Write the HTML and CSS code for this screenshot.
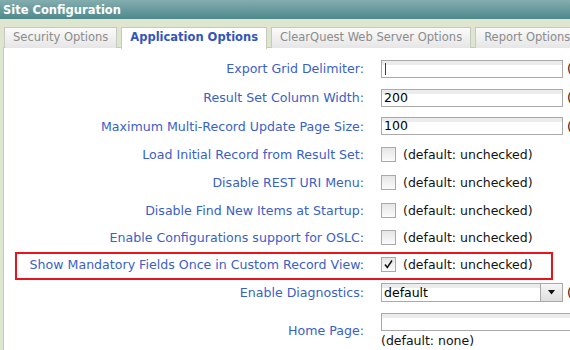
FILE: index.html
```html
<!DOCTYPE html>
<html lang="en">
<head>
    <meta charset="UTF-8">
    <title>Site Configuration</title>
    <link rel="stylesheet" href="styles.css">
</head>
<body>
    <div class="window">
        <div class="titlebar">Site Configuration</div>
        <div class="tabs">
            <div class="tab">Security Options</div>
            <div class="tab active">Application Options</div>
            <div class="tab">ClearQuest Web Server Options</div>
            <div class="tab">Report Options</div>
        </div>
        <div class="panel">
            <div class="row tall">
                <div class="label">Export Grid Delimiter:</div>
                <div class="control">
                    <div class="textbox"><span class="caret"></span></div>
                    <span class="hint">(default: ,)</span>
                </div>
            </div>
            <div class="row tall">
                <div class="label">Result Set Column Width:</div>
                <div class="control">
                    <div class="textbox">200</div>
                    <span class="hint">(default: 200)</span>
                </div>
            </div>
            <div class="row">
                <div class="label">Maximum Multi-Record Update Page Size:</div>
                <div class="control">
                    <div class="textbox">100</div>
                    <span class="hint">(default: 100)</span>
                </div>
            </div>
            <div class="row">
                <div class="label">Load Initial Record from Result Set:</div>
                <div class="control">
                    <span class="checkbox"></span>
                    <span class="note">(default: unchecked)</span>
                </div>
            </div>
            <div class="row">
                <div class="label">Disable REST URI Menu:</div>
                <div class="control">
                    <span class="checkbox"></span>
                    <span class="note">(default: unchecked)</span>
                </div>
            </div>
            <div class="row">
                <div class="label">Disable Find New Items at Startup:</div>
                <div class="control">
                    <span class="checkbox"></span>
                    <span class="note">(default: unchecked)</span>
                </div>
            </div>
            <div class="row short">
                <div class="label">Enable Configurations support for OSLC:</div>
                <div class="control">
                    <span class="checkbox"></span>
                    <span class="note">(default: unchecked)</span>
                </div>
            </div>
            <div class="row marked">
                <div class="label">Show Mandatory Fields Once in Custom Record View:</div>
                <div class="control">
                    <span class="checkbox checked">
                        <svg width="13" height="13" viewBox="0 0 13 13"><path d="M3 6.5 L5.3 9.5 L10 2.5" fill="none" stroke="#111" stroke-width="1.5"/></svg>
                    </span>
                    <span class="note">(default: unchecked)</span>
                </div>
            </div>
            <div class="row">
                <div class="label">Enable Diagnostics:</div>
                <div class="control">
                    <div class="select">
                        <span class="select-value">default</span>
                        <span class="select-button">
                            <svg width="9" height="5" viewBox="0 0 9 5"><path d="M1 0 H8 L4.5 4.5 Z" fill="#111"/></svg>
                        </span>
                    </div>
                    <span class="hint">(default: default)</span>
                </div>
            </div>
            <div class="row home">
                <div class="label">Home Page:</div>
                <div class="control stack">
                    <div class="textbox wide"></div>
                    <span class="note">(default: none)</span>
                </div>
            </div>
        </div>
    </div>
</body>
</html>
```

FILE: styles.css
```css
* {
    font-family: "DejaVu Sans", Verdana, sans-serif;
    margin: 0;
    padding: 0;
    box-sizing: border-box;
}
body {
    width: 570px;
    height: 350px;
    overflow: hidden;
    background-color: #dfe6d0;
}
.window {
    width: 760px;
}
.titlebar {
    height: 19px;
    padding: 2px 3px 0 3px;
    background: linear-gradient(#84adae, #4e898d);
    color: #FFFFFF;
    font-weight: bold;
    font-size: 11.5px;
    line-height: 16px;
}
.tabs {
    display: flex;
    gap: 4px;
    padding: 8px 0 0 4px;
    height: 28px;
    background-color: #dfe6d0;
}
.tab {
    height: 21px;
    padding: 0 8px;
    border: 1px solid #c6c9c0;
    border-bottom: none;
    background: linear-gradient(#fafafa, #e6e6e6);
    color: #8c8c8c;
    font-size: 11.5px;
    line-height: 19px;
    white-space: nowrap;
}
.tab.active {
    position: relative;
    z-index: 1;
    height: 22px;
    background: #FFFFFF;
    color: #3355bb;
    font-weight: bold;
}
.panel {
    margin-left: 3px;
    padding-top: 6px;
    height: 310px;
    background-color: #FFFFFF;
    border-top: 1px solid #c6c9c0;
    border-left: 1px solid #c6c9c0;
}
.row {
    display: flex;
    align-items: center;
    height: 28px;
}
.row.tall {
    height: 29px;
}
.row.short {
    height: 27px;
}
.row.home {
    height: 46px;
    padding-top: 3px;
}
.row.marked {
    position: relative;
    height: 27px;
}
.row.marked::before {
    content: "";
    position: absolute;
    left: 11px;
    top: 1px;
    width: 534px;
    height: 24px;
    border: 2px solid #e8141c;
}
.label {
    width: 360px;
    flex-shrink: 0;
    text-align: right;
    color: #3a5fc8;
    font-size: 12.6px;
    white-space: nowrap;
}
.control {
    display: flex;
    align-items: center;
    margin-left: 17px;
    font-size: 12.5px;
    color: #111111;
    white-space: nowrap;
}
.control.stack {
    flex-direction: column;
    align-items: flex-start;
    gap: 2px;
}
.textbox {
    width: 182px;
    height: 18px;
    padding: 0 2px;
    border: 1px solid #a9a9a9;
    background: linear-gradient(#ececec 0, #ececec 4px, #FFFFFF 4px);
    font-size: 12.5px;
    line-height: 16px;
    color: #000000;
}
.textbox.wide {
    width: 260px;
}
.caret {
    display: inline-block;
    width: 1px;
    height: 12px;
    margin: 2px 0 0 1px;
    background-color: #4a2a7a;
    vertical-align: top;
}
.hint {
    margin-left: 4px;
}
.checkbox {
    display: flex;
    align-items: center;
    justify-content: center;
    width: 15px;
    height: 15px;
    border: 1px solid #a9a9a9;
    background: linear-gradient(#e6e6e6, #fbfbfb);
}
.note {
    margin-left: 7px;
}
.stack .note {
    margin-left: 0;
}
.select {
    display: flex;
    width: 182px;
    height: 19px;
    border: 1px solid #a9a9a9;
    background: linear-gradient(#ececec 0, #ececec 4px, #FFFFFF 4px);
}
.select-value {
    flex-grow: 1;
    padding-left: 2px;
    line-height: 17px;
    color: #000000;
}
.select-button {
    display: flex;
    align-items: center;
    justify-content: center;
    width: 22px;
    border-left: 1px solid #a9a9a9;
    background: linear-gradient(#f6f6f6, #dedede);
}
```
